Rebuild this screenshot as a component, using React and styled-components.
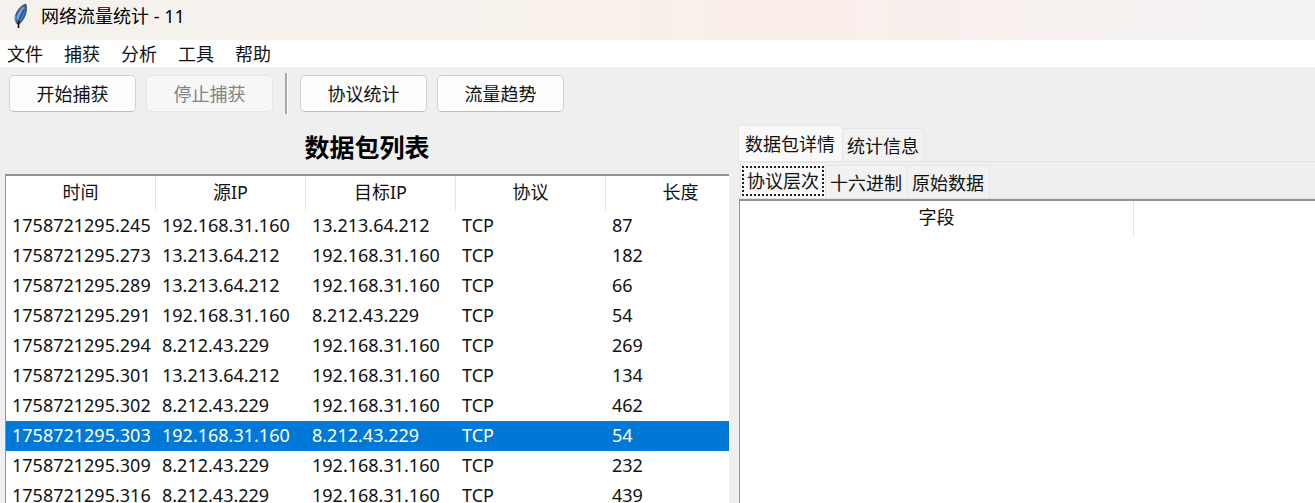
import React, { useState } from "react";
import styled, { createGlobalStyle } from "styled-components";

const GlobalStyle = createGlobalStyle`
  * { box-sizing: border-box; }
  body {
    margin: 0;
    background: #efefef;
    overflow: hidden;
  }
  body, button, table {
    font-family: "Noto Sans", "Noto Sans CJK SC", sans-serif;
    font-size: 18px;
    line-height: 24px;
    color: #111;
  }
`;

const Window = styled.div`
  display: flex;
  flex-direction: column;
  height: 100vh;
  overflow: hidden;
`;

const TitleBar = styled.header`
  display: flex;
  align-items: center;
  gap: 11px;
  flex: none;
  height: 40px;
  padding: 0 12px 8px;
  background: linear-gradient(90deg, #f5f2ee 0%, #f7f1ec 40%, #faeeea 60%, #f3f3f3 100%);
`;

const Title = styled.h1`
  margin: 0;
  font-size: 18px;
  font-weight: 400;
  color: #000;
`;

const MenuBar = styled.nav`
  display: flex;
  align-items: center;
  gap: 21px;
  flex: none;
  height: 27px;
  padding: 0 7px;
  background: #fff;
`;

const MenuItem = styled.button`
  padding: 0;
  border: 0;
  background: none;
`;

const Toolbar = styled.div`
  display: flex;
  align-items: center;
  gap: 10px;
  flex: none;
  padding: 6px 9px;
`;

const ToolButton = styled.button`
  width: 127px;
  height: 37px;
  padding: 0;
  border: 1px solid #d2d2d2;
  border-bottom-color: #bcbcbc;
  border-radius: 5px;
  background: #fdfdfd;

  &:disabled {
    border-color: #e6e6e6;
    background: #f7f7f7;
    color: #838383;
  }
`;

const Divider = styled.span`
  width: 3px;
  height: 41px;
  margin: 0 2px;
  border-left: 2px solid #a8a8a8;
  border-right: 1px solid #fff;
`;

const Body = styled.main`
  display: grid;
  grid-template-columns: minmax(0, 724fr) minmax(0, 577fr);
  gap: 9px;
  flex: 1;
  min-height: 0;
  padding-left: 5px;
`;

const Pane = styled.section`
  display: flex;
  flex-direction: column;
  min-width: 0;
  min-height: 0;
`;

const PaneTitle = styled.h2`
  margin: 0;
  padding: 12px 0;
  font-size: 25px;
  font-weight: 700;
  line-height: 30px;
  text-align: center;
  color: #000;
`;

const TableFrame = styled.div`
  flex: 1;
  min-height: 0;
  overflow: hidden;
  margin-left: ${(p) => p.$inset || 0};
  border-top: 2px solid #8f949c;
  border-left: 1px solid #8f949c;
  background: #fff;
`;

const Table = styled.table`
  width: ${(p) => p.$width};
  table-layout: fixed;
  border-collapse: separate;
  border-spacing: 0;
`;

const HeadCell = styled.th`
  height: 35px;
  padding: 0 0 4px;
  border-right: 1px solid #e5e5e5;
  font-weight: 400;
`;

const Row = styled.tr`
  background: ${(p) => (p.$selected ? "#0078d7" : "#fff")};
  color: ${(p) => (p.$selected ? "#fff" : "#111")};
`;

const Cell = styled.td`
  height: 30px;
  padding: 0 5px 2px 6px;
`;

const Clip = styled.div`
  overflow: hidden;
  white-space: nowrap;
`;

const TabList = styled.div`
  display: flex;
  align-items: flex-end;
  flex: none;
  height: ${(p) => p.$height};
  padding-left: ${(p) => p.$indent || 0};
  border-bottom: 1px solid #e4e4e4;
`;

const Tab = styled.button`
  height: ${(p) => (p.$active ? "36px" : "33px")};
  padding: ${(p) => (p.$active ? "0 7px 0 6px" : "2px 4px 0")};
  border: 1px solid #e6e6e6;
  border-bottom: 0;
  border-left-width: ${(p) => (p.$active ? "1px" : "0")};
  background: ${(p) => (p.$active ? "#f9f9f9" : "#f2f2f2")};
`;

const InnerTab = styled(Tab)`
  padding: ${(p) => (p.$active ? "0 1px" : "2px 5px 0 4px")};
`;

const FocusRing = styled.span`
  display: block;
  padding: 1px 3px;
  border: 2px dotted #222;
`;

const packets = [
  ["1758721295.245", "192.168.31.160", "13.213.64.212", "TCP", "87"],
  ["1758721295.273", "13.213.64.212", "192.168.31.160", "TCP", "182"],
  ["1758721295.289", "13.213.64.212", "192.168.31.160", "TCP", "66"],
  ["1758721295.291", "192.168.31.160", "8.212.43.229", "TCP", "54"],
  ["1758721295.294", "8.212.43.229", "192.168.31.160", "TCP", "269"],
  ["1758721295.301", "13.213.64.212", "192.168.31.160", "TCP", "134"],
  ["1758721295.302", "8.212.43.229", "192.168.31.160", "TCP", "462"],
  ["1758721295.303", "192.168.31.160", "8.212.43.229", "TCP", "54"],
  ["1758721295.309", "8.212.43.229", "192.168.31.160", "TCP", "232"],
  ["1758721295.316", "8.212.43.229", "192.168.31.160", "TCP", "439"],
];

const FeatherIcon = () => (
  <svg width="18" height="26" viewBox="0 0 18 26" aria-hidden="true">
    <path d="M13.500 1.500 C9 3 5 8 3.500 13 C3 16 3.500 18 5 20.500 L7 21 C10 18 13.500 13 14 8 C14.500 5 14.500 3 13.500 1.500Z" fill="#3d7cc9" stroke="#4a4d52" strokeWidth="1.400" />
    <path d="M11.500 4.500 C9 7 6.500 11 5.500 16" fill="none" stroke="#6ba6e8" strokeWidth="2.200" />
    <path d="M12.500 6 C10 11 7.500 15 6.500 20" fill="none" stroke="#1f3f6b" strokeWidth="1" />
    <path d="M6.500 18 L6.500 25" fill="none" stroke="#111" strokeWidth="1.600" />
    <path d="M3.500 12.500 L3 17 L4.500 20.500" fill="none" stroke="#8f9296" strokeWidth="1" />
  </svg>
);

export default function App() {
  const [selected, setSelected] = useState(7);
  return (
    <Window>
      <GlobalStyle />
      <TitleBar>
        <FeatherIcon />
        <Title>网络流量统计 - 11</Title>
      </TitleBar>
      <MenuBar>
        {["文件", "捕获", "分析", "工具", "帮助"].map((m) => (
          <MenuItem key={m} type="button">{m}</MenuItem>
        ))}
      </MenuBar>
      <Toolbar>
        <ToolButton type="button">开始捕获</ToolButton>
        <ToolButton type="button" disabled>停止捕获</ToolButton>
        <Divider />
        <ToolButton type="button">协议统计</ToolButton>
        <ToolButton type="button">流量趋势</ToolButton>
      </Toolbar>
      <Body>
        <Pane>
          <PaneTitle>数据包列表</PaneTitle>
          <TableFrame>
            <Table $width="750px">
              <thead>
                <tr>
                  {["时间", "源IP", "目标IP", "协议", "长度"].map((h) => (
                    <HeadCell key={h} scope="col">{h}</HeadCell>
                  ))}
                </tr>
              </thead>
              <tbody>
                {packets.map((packet, i) => (
                  <Row key={packet[0]} $selected={i === selected} onClick={() => setSelected(i)}>
                    {packet.map((value, c) => (
                      <Cell key={c}><Clip>{value}</Clip></Cell>
                    ))}
                  </Row>
                ))}
              </tbody>
            </Table>
          </TableFrame>
        </Pane>
        <Pane>
          <TabList role="tablist" $height="42px">
            <Tab type="button" role="tab" aria-selected="true" $active>数据包详情</Tab>
            <Tab type="button" role="tab" aria-selected="false">统计信息</Tab>
          </TabList>
          <TabList role="tablist" $height="37px" $indent="2px">
            <InnerTab type="button" role="tab" aria-selected="true" $active>
              <FocusRing>协议层次</FocusRing>
            </InnerTab>
            <InnerTab type="button" role="tab" aria-selected="false">十六进制</InnerTab>
            <InnerTab type="button" role="tab" aria-selected="false">原始数据</InnerTab>
          </TabList>
          <TableFrame $inset="1px">
            <Table $width="788px">
              <thead>
                <tr>
                  <HeadCell scope="col">字段</HeadCell>
                  <HeadCell scope="col" aria-label="值" />
                </tr>
              </thead>
            </Table>
          </TableFrame>
        </Pane>
      </Body>
    </Window>
  );
}
